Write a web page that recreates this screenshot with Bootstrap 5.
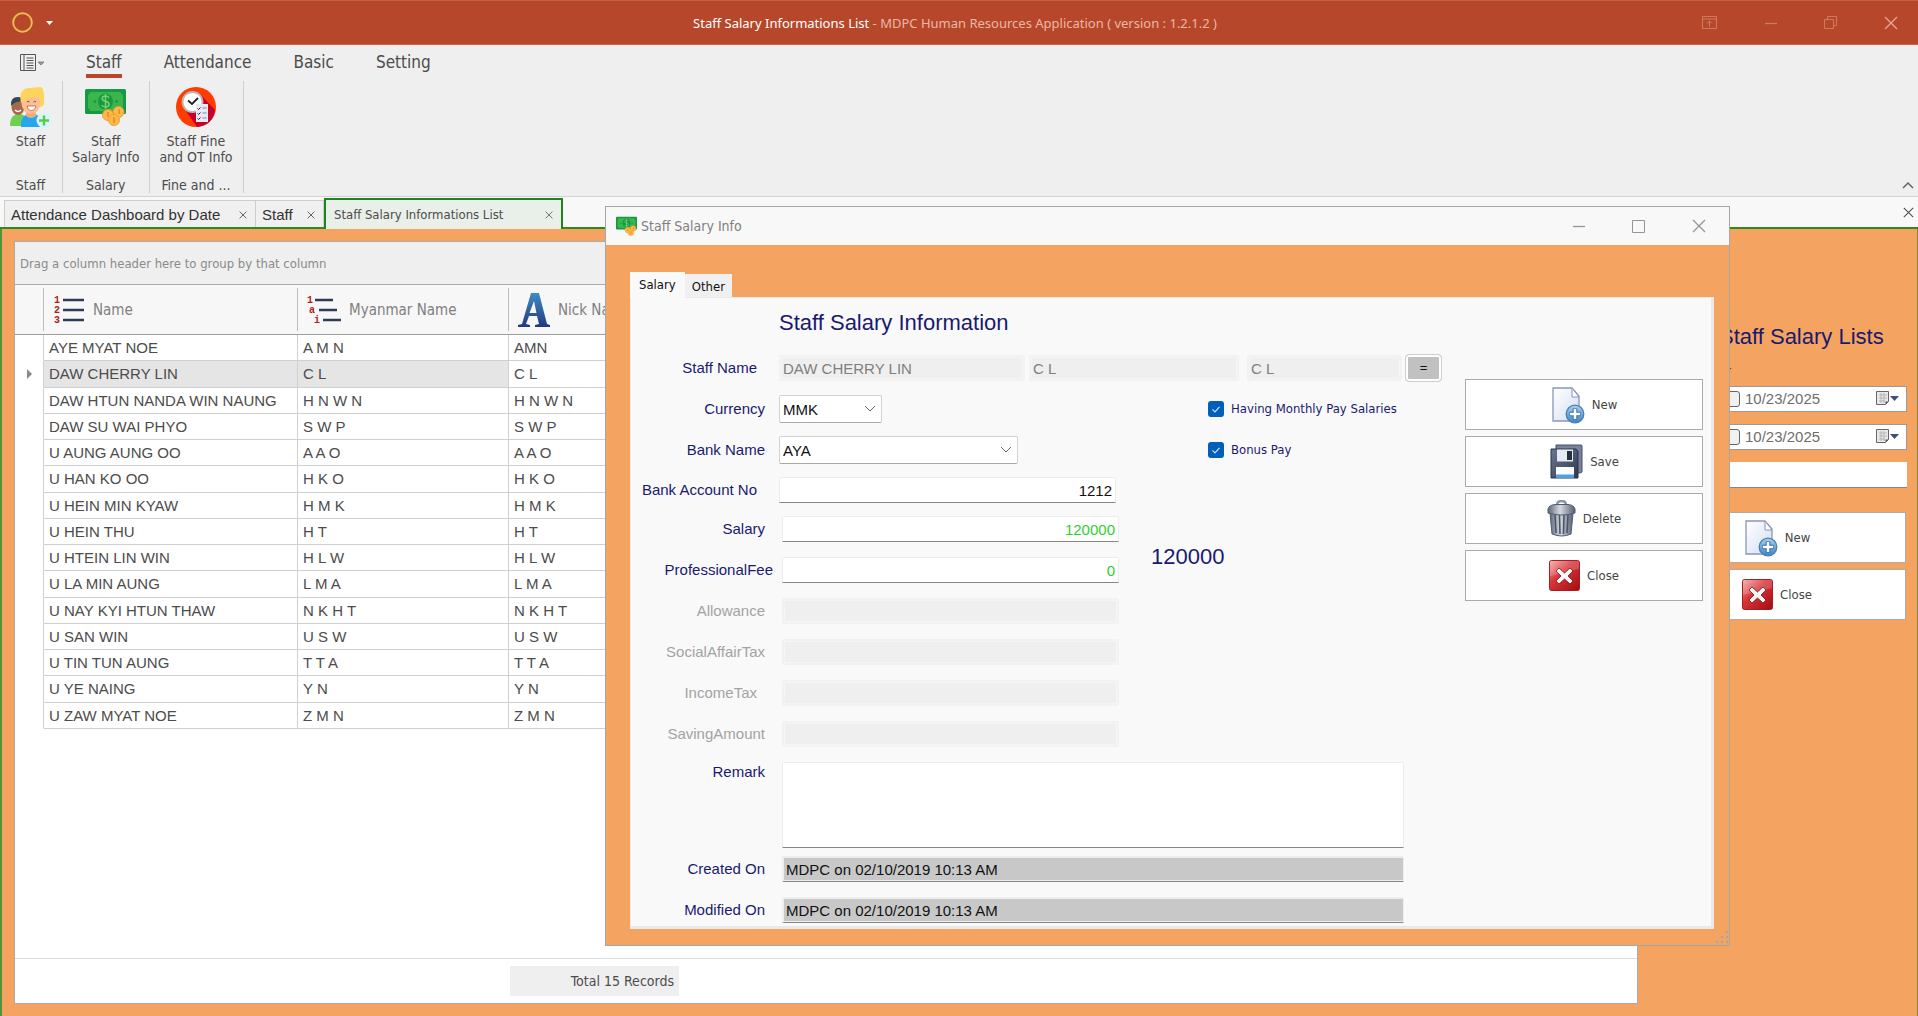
<!DOCTYPE html>
<html lang="en">
<head>
<meta charset="utf-8">
<meta name="viewport" content="width=device-width, initial-scale=1">
<title>MDPC Human Resources Application</title>
<link href="https://cdn.jsdelivr.net/npm/bootstrap@5.3.0/dist/css/bootstrap.min.css" rel="stylesheet">
<style>
:root{--ui:"DejaVu Sans Condensed","Noto Sans",sans-serif;--form:"Liberation Sans",Arial,sans-serif;--brand:#b7472a;--peach:#f4a460;--navy:#191970;--line:#ababab;--ink:#4c4c4c}
body{font-family:var(--ui);font-size:14px;line-height:16px;color:var(--ink);background:#f8f8f8;overflow:hidden}
button{font-family:inherit}
.plain-btn{border:0;background:none;padding:0;color:inherit;line-height:0}

/* title bar */
.app-title{background:var(--brand);height:45px;border-top:1px solid #c2603f;border-bottom:1px solid #c5694f;font:13px/16px "Noto Sans",sans-serif;color:#eab9a6;padding:0 20px 0 12px}
.app-title strong{font-weight:400;color:#fff}
.app-title .side{flex:1 1 0}
.app-title .win-tools{gap:46px;color:#cf7a62}
.app-title .quick{margin-left:13px;color:#fff}
.app-title .shut{color:#e5a797}

/* ribbon */
.ribbon{background:#efefef;border-bottom:1px solid #d2d2d2;height:152px}
.ribbon-tabs{height:36px;padding-left:20px;font-size:17px}
.ribbon-tabs a{color:var(--ink);text-decoration:none;line-height:26px;height:29px;margin-right:42px;border-bottom:4px solid transparent}
.ribbon-tabs a.current{border-color:var(--brand)}
.file-menu{width:66px}
.ribbon-group{border-right:1px solid #cfcfcf;height:112px;padding:5px 10px 0 9px}
.ribbon-group button{color:inherit;line-height:16px}
.ribbon-group svg{display:block;margin:0 auto 5px}
.ribbon-foot{margin-top:auto;padding-top:2px}

/* document tabs */
.doc-tabs{height:32px;padding-left:4px;border-bottom:2px solid #2f8a1d;flex:none}
.doc-tab{height:27px;background:#f0f0f0;border:1px solid #cdcdcd;border-bottom:0;padding:2px 8px 0 6px;font:15px/20px var(--form);color:#333}
.doc-tab.current{height:31px;background:#e9efe9;border:2px solid #1c861c;border-bottom:0;font:13px/20px var(--ui);color:var(--ink);margin-bottom:-2px;padding:0 8px}
.w-dash{width:252px}.w-staff{width:68px}.w-list{width:239px}
.work{background:var(--peach);border-left:2px solid #4f9438;border-right:1px solid #7c8a2a;min-height:0;padding:12px 10px 12px 12px}

/* staff grid */
.sheet{background:#fff;border:1px solid var(--line);min-width:0}
.group-hint{background:#efefef;border-bottom:1px solid var(--line);height:43px;padding:14px 5px;font-size:13px;color:#8a8a8a}
.staff-grid{table-layout:fixed;width:100%;border-collapse:separate;border-spacing:0;font:15px/20px var(--form)}
.staff-grid th{height:50px;background:#f7f7f7;border-bottom:1px solid #9e9e9e;font:15px/20px var(--ui);color:#808080;padding:0 9px;vertical-align:middle;position:relative}
.staff-grid th+th::before{content:"";position:absolute;left:-1px;top:3px;bottom:3px;border-left:1px solid #bdbdbd}
.staff-grid td{height:26px;padding:0 5px;border-right:1px solid #d0d0d0;border-bottom:1px solid #d0d0d0;white-space:nowrap}
.staff-grid tr:nth-child(4n+2) td{height:27px}
.staff-grid tbody td:first-child{border-bottom-color:transparent}
.staff-grid .picked td:nth-child(2),.staff-grid .picked td:nth-child(3){background:#e5e5e5}
.c-mark{width:29px}.c-name{width:254px}.c-mm{width:211px}
.grid-foot{border-top:1px solid #dcdcdc;padding:7px 0 7px 495px}
.grid-foot output{width:169px;height:30px;background:#efefef;line-height:30px;padding-right:5px}

/* right-hand panel */
.filter-pane{width:269px;flex:none;padding:68px 0 0 10px}
.pane-title{font:22px/28px var(--form);color:var(--navy);padding-left:71px;margin:14px 0 9px}
.range-mark{padding-left:79px;height:26px;line-height:16px}
.date-box{height:26px;background:#fff;border:1px solid #9a9a9a;font:15px/24px var(--form);color:#6e6e6e;padding:0 6px 0 75px;margin-bottom:12px}
.date-box input[type=checkbox]{appearance:none;width:16px;height:16px;border:1px solid #666;border-radius:3px;background:#f1f1f1;margin:0 5px 0 0;flex:none}
.date-box input[type=text]{border:0;padding:0;width:90px;color:inherit;background:none}
.search-box{height:26px;border:0;border-bottom:1px solid #868686;background:#fff;width:100%}
.tool-btn{height:51px;background:#fff;border:1px solid #ababab;color:#444;gap:7px;font:13px/16px var(--ui);margin-bottom:6px}
.filter-pane .tool-btn{width:258px}

/* salary window */
.salary-window{position:absolute;left:605px;top:206px;width:1125px;border:1px solid #a6a6a6;background:var(--peach)}
.window-bar{height:38px;background:#f8f8f8;padding:0 23px 0 10px;color:#808080}
.window-bar .win-tools{gap:46px;color:#959595}
.window-body{padding:27px 15px 16px 24px}
.sheet-tab{border:0;background:#f0f0f0;color:#111;font:13px/16px var(--ui);height:23px;padding:2px 7px 0}
.sheet-tab.current{background:#f9f9f9;height:26px;padding:0 9px;margin-bottom:-1px}
.sheet-page{background:#f9f9f9;border:solid #e9e9e9;border-width:1px 3px 3px 1px;padding:11px 8px 3px 0}
.sheet-page h1{font:22px/28px var(--form);color:var(--navy);margin:0 0 17px;padding-left:148px}
.salary-form{width:811px;font:15px/20px var(--form);color:var(--navy)}
.line{margin-bottom:13px}
.deep .line{margin-bottom:15px}
.line>.cap{width:142px;text-align:right;flex:none}
.off>label{color:#a3a3a3}
.near{margin-left:6px}.far{margin-left:9px}
.line input[type=text],.line textarea{height:26px;border:1px solid #ececec;border-bottom:1px solid #868686;padding:0 3px;background:#fff;color:#111;border-radius:2px 2px 0 0}
.line input[type=text]:disabled{border:2px solid #f2f2f2;background:#efefef;box-shadow:inset 0 0 0 1px #f5f5f5;color:#808080;border-radius:2px;padding:0 2px}
.line input[type=text][readonly]{background:#c8c8c8;border-color:#eee #eee #868686;box-shadow:inset 0 -1px #eee;border-width:2px 1px 1px 2px;padding:0 2px}
.line select{height:28px;border:1px solid #d2d2d2;border-bottom-color:#a9a9a9;border-radius:2px;padding:1px 3px 0;color:#111;appearance:none;background:#fff url("data:image/svg+xml,%3Csvg xmlns='http://www.w3.org/2000/svg' width='12' height='8' viewBox='0 0 12 8'%3E%3Cpath d='M1 1l5 5 5-5' fill='none' stroke='%23666'/%3E%3C/svg%3E") no-repeat right 5px center}
.line input.money{color:#32cd32!important}
.line textarea{height:86px;resize:none}
.w-nick{width:155px}.w-mm{width:210px}.w-name{width:246px}.w-cur{width:103px}.w-bank{width:239px}.w-num{width:337px}.w-long{width:622px}
.pick-btn{width:37px;height:28px;border:1px solid #cfcfcf;border-radius:4px;background:#c1c1c1;box-shadow:inset 0 0 0 2px #fff;color:#111;font:13px/20px var(--form);padding:0}
.tick{width:234px;gap:7px;font:13px/16px var(--ui)}
.tick input{appearance:none;flex:none;width:16px;height:16px;border-radius:3px;margin:0;background:#005fb8 url("data:image/svg+xml,%3Csvg xmlns='http://www.w3.org/2000/svg' width='16' height='16' viewBox='0 0 16 16'%3E%3Cpath d='M4.500 8.300l2.500 2.500 4.500-5' fill='none' stroke='%23cfe4f7' stroke-width='1.200'/%3E%3C/svg%3E")}
.net-pay{font:22px/28px var(--form);margin-left:32px;padding-top:0}
.action-col{width:238px;flex:none;padding-top:70px}
.action-col .tool-btn{width:100%}
.grip{position:absolute;right:0;bottom:0}
</style>
</head>
<body class="d-flex flex-column vh-100">

<svg class="position-absolute" width="0" height="0" aria-hidden="true">
  <defs>
    <linearGradient id="gBlue" x1="0" y1="0" x2="0" y2="1"><stop offset="0" stop-color="#a9d0f0"/><stop offset="1" stop-color="#3e86c4"/></linearGradient>
    <linearGradient id="gPaper" x1="0" y1="0" x2="1" y2="1"><stop offset="0" stop-color="#fff"/><stop offset="1" stop-color="#d3def2"/></linearGradient>
    <linearGradient id="gRed" x1="0" y1="0" x2="1" y2="1"><stop offset="0" stop-color="#f3a6a0"/><stop offset=".4" stop-color="#d8353a"/><stop offset="1" stop-color="#a30c10"/></linearGradient>
    <linearGradient id="gCan" x1="0" y1="0" x2="1" y2="0"><stop offset="0" stop-color="#5d6778"/><stop offset=".45" stop-color="#d5dae2"/><stop offset="1" stop-color="#566070"/></linearGradient>
    <linearGradient id="gDisk" x1="0" y1="0" x2="1" y2="1"><stop offset="0" stop-color="#6a7890"/><stop offset="1" stop-color="#2f3a50"/></linearGradient>
    <linearGradient id="gLetter" x1="0" y1="0" x2="0" y2="1"><stop offset="0" stop-color="#3f8cc4"/><stop offset="1" stop-color="#22397c"/></linearGradient>
    <symbol id="iNew" viewBox="0 0 34 38"><path d="M2 2h19l7 8v25H2z" fill="url(#gPaper)" stroke="#8796bd" stroke-width="1.300"/><path d="M21 2v9h7z" fill="#fff" stroke="#8796bd"/><circle cx="24" cy="28" r="8.800" fill="url(#gBlue)" stroke="#4b7fb2" stroke-width="1.300"/><path d="M24 22.500v11M18.500 28h11" stroke="#2f6da8" stroke-width="4.600"/><path d="M24 23v10M19 28h10" stroke="#fff" stroke-width="2.600"/></symbol>
    <symbol id="iSave" viewBox="0 0 34 36"><path d="M7 1h25q1 0 1 1v26l-2 1H7z" fill="#76839b" stroke="#465168"/><path d="M2 5h25l2 2v27H2z" fill="url(#gDisk)" stroke="#2b3448"/><path d="M8 5.500h16v12H8z" fill="#e6ecf5"/><path d="M18 7h5v9h-5z" fill="#27303f"/><path d="M7 23h18v11H7z" fill="#fafcff"/><path d="M7 30.500h18V34H7z" fill="#4fa0df"/></symbol>
    <symbol id="iBin" viewBox="0 0 29 37"><path d="M10 5q0-4 4.500-4T19 5" fill="none" stroke="#8a93a3" stroke-width="2.400"/><path d="M3 13h23l-2 21q-9 4-19 0z" fill="url(#gCan)" stroke="#525c6c"/><path d="M8 15l1 18M12.500 15l.5 19M17 15l-.5 19M21 15l-1 18" stroke="#4b5566" stroke-width="1.600"/><path d="M1 9q1-4 7-4.500h13q6 .5 7 4.500v4q-13 4-27 0z" fill="url(#gCan)" stroke="#525c6c"/></symbol>
    <symbol id="iStop" viewBox="0 0 31 31"><rect x=".5" y=".5" width="30" height="30" rx="2" fill="url(#gRed)" stroke="#a51f20"/><path d="M1 1h29v8L1 16z" fill="#fff" opacity=".18"/><path d="M10 8l5.500 5L21 8l3 3-5 5 5 5-3 3-5.500-5-5.500 5-3-3 5-5-5-5z" fill="#f7f7f7" stroke="#7d1313" stroke-width=".8"/></symbol>
    <symbol id="iMoney" viewBox="0 0 41 38"><rect y="1" width="41" height="25" rx="1.500" fill="#159947"/><path d="M5 4h31a3 3 0 0 0 2 3v13a3 3 0 0 0-2 3H5a3 3 0 0 0-2-3V7a3 3 0 0 0 2-3z" fill="#3cb54a"/><ellipse cx="20.500" cy="13.500" rx="7.500" ry="8" fill="#159947"/><path d="M24 9.800q-1-1.800-3.500-1.800-3.300 0-3.300 2.500 0 2 3.300 2.800 3.600.8 3.600 3 0 2.700-3.600 2.700-2.800 0-3.700-2M20.500 6v15" fill="none" stroke="#7ad06d" stroke-width="1.500"/><circle cx="10" cy="13.500" r="1.400" fill="#159947"/><circle cx="31.500" cy="13.500" r="1.400" fill="#159947"/><g fill="#fdb94a" stroke="#f29a2e" stroke-width=".9"><circle cx="33.500" cy="24" r="5.500"/><circle cx="23" cy="27" r="5.500"/><circle cx="29" cy="32" r="5.500"/></g><path d="M29 29v6M23 24v5M34 21v5" stroke="#f08a1c" stroke-width="1.600"/></symbol>
    <symbol id="iDate" viewBox="0 0 24 18"><path d="M1.500 1.500h12v10l-3 3h-9z" fill="#e8e8e8" stroke="#666"/><path d="M4 5h8M4 8h8M4 11h6M6 3v10M9 3v10" stroke="#b5b5b5"/><path d="M10.500 14.500l3-3h-3z" fill="#555"/><path d="M15 6h9l-4.500 5z" fill="#3a4f7a"/></symbol>
    <symbol id="iX" viewBox="0 0 14 14"><path d="M1 1l12 12M13 1L1 13" stroke="currentColor" stroke-width="1.300"/></symbol>
    <symbol id="iMin" viewBox="0 0 14 14"><path d="M1 7.500h12" stroke="currentColor" stroke-width="1.300"/></symbol>
    <symbol id="iMax" viewBox="0 0 14 14"><path d="M.5 1.500h12v12H.5z" fill="none" stroke="currentColor"/></symbol>
  </defs>
</svg>

<header class="app-title d-flex align-items-center flex-shrink-0">
  <div class="side d-flex align-items-center">
    <svg width="21" height="21" viewBox="0 0 21 21" aria-hidden="true"><circle cx="10.500" cy="10.500" r="9.300" fill="none" stroke="#e0a93c" stroke-width="2"/><circle cx="10.500" cy="10.500" r="9.500" fill="none" stroke="#f6d97c" stroke-width=".6"/></svg>
    <button class="plain-btn quick" aria-label="Quick access"><svg width="7" height="4"><path d="M0 0h7L3.500 4z" fill="currentColor"/></svg></button>
  </div>
  <div><strong>Staff Salary Informations List</strong> - MDPC Human Resources Application ( version : 1.2.1.2 )</div>
  <div class="side win-tools d-flex justify-content-end align-items-center">
    <button class="plain-btn" aria-label="Ribbon display"><svg width="16" height="14" viewBox="0 0 16 14" fill="none" stroke="currentColor"><path d="M.5.500h14v12H.5zM.5 3h14M7.500 11V5M5 7.500L7.500 5 10 7.500"/></svg></button>
    <button class="plain-btn" aria-label="Minimize"><svg width="14" height="14"><use href="#iMin"/></svg></button>
    <button class="plain-btn" aria-label="Restore"><svg width="14" height="14" viewBox="0 0 14 14" fill="none" stroke="currentColor"><path d="M.5 3.500h9v9h-9zM3.500 3V.500h9v9H10"/></svg></button>
    <button class="plain-btn shut" aria-label="Close"><svg width="14" height="14"><use href="#iX"/></svg></button>
  </div>
</header>

<section class="ribbon flex-shrink-0">
  <nav class="ribbon-tabs d-flex align-items-center">
    <button class="plain-btn file-menu text-start" aria-label="File menu"><svg width="26" height="18" viewBox="0 0 26 18" fill="none" stroke="#555"><path d="M.5.500h15v16H.5zM4 .5v16M6.500 4h7M6.500 6.500h7M6.500 9h7M6.500 11.500h7M6.500 14h7"/><path d="M18 8h6l-3 3z" fill="#999" stroke="#888"/></svg></button>
    <a href="#" class="current">Staff</a><a href="#">Attendance</a><a href="#">Basic</a><a href="#">Setting</a>
  </nav>
  <div class="d-flex text-center">
    <div class="ribbon-group d-flex flex-column">
      <button class="plain-btn"><svg width="43" height="42" viewBox="0 0 43 42" aria-hidden="true"><path d="M1 40q0-12 9-12 5 0 7 4v8z" fill="#6fd04f"/><ellipse cx="9" cy="21" rx="6.500" ry="8" fill="#a8694b"/><path d="M2 20q-1-9 7-9 5 0 6 5-8-2-13 4z" fill="#33475a"/><path d="M6 24q3 3 6 0" stroke="#fff" stroke-width="1.500" fill="none"/><path d="M12 41q-1-13 10-13 12 0 12 13z" fill="#25a7f0"/><path d="M17 24h10v6q-5 4-10 0z" fill="#f5a87a"/><ellipse cx="22" cy="17" rx="9.500" ry="11" fill="#ffbe94"/><path d="M12 17Q9 3 20 2l12-1q4 2 3 17-3 5-4 2 1-8-3-9-10 1-16 6z" fill="#ffd35c"/><path d="M18 16q1-1.500 2.500 0M24.500 16q1-1.500 2.500 0" stroke="#7a4a35" fill="none"/><path d="M18 20h9q-1 4.500-4.500 4.500T18 20z" fill="#fff" stroke="#a5553a" stroke-width=".7"/><circle cx="35" cy="34.500" r="7.500" fill="#d8f3fb"/><path d="M35 29.500v10M30 34.500h10" stroke="#5acb46" stroke-width="2.400"/></svg>Staff</button>
      <div class="ribbon-foot">Staff</div>
    </div>
    <div class="ribbon-group d-flex flex-column">
      <button class="plain-btn"><svg width="41" height="42" viewBox="0 -1 41 40" aria-hidden="true"><use href="#iMoney" width="41" height="38"/></svg>Staff<br>Salary Info</button>
      <div class="ribbon-foot">Salary</div>
    </div>
    <div class="ribbon-group d-flex flex-column">
      <button class="plain-btn"><svg width="42" height="42" viewBox="0 0 42 42" aria-hidden="true"><circle cx="21" cy="21" r="20" fill="#ff3d00"/><path d="M26 9l14 15q-2 15-18 17l-11-16z" fill="#c4002b"/><circle cx="17.500" cy="16" r="10" fill="#fff" stroke="#b9b9b9" stroke-width="1.800"/><path d="M13 14.500l4 3.500 6-6" fill="none" stroke="#222" stroke-width="1.800"/><path d="M21 18h12v18H21z" fill="#e9e9f4"/><path d="M22.500 22.500l1 1 2-2M22.500 27.500l1 1 2-2M22.500 32.500l1 1 2-2" stroke="#222" fill="none"/><path d="M27.500 22h4M27.500 27h4M27.500 32h4" stroke="#b5b5cc" stroke-width="2"/></svg>Staff Fine<br>and OT Info</button>
      <div class="ribbon-foot">Fine and ...</div>
    </div>
    <button class="plain-btn ms-auto align-self-end pe-1 pb-1" aria-label="Collapse ribbon"><svg width="12" height="8"><path d="M1 7l5-5 5 5" fill="none" stroke="#666" stroke-width="1.500"/></svg></button>
  </div>
</section>

<nav class="doc-tabs d-flex align-items-end">
  <div class="doc-tab w-dash d-flex justify-content-between align-items-center">Attendance Dashboard by Date<button class="plain-btn" aria-label="Close tab"><svg width="8" height="8"><use href="#iX"/></svg></button></div>
  <div class="doc-tab w-staff d-flex justify-content-between align-items-center border-start-0">Staff<button class="plain-btn" aria-label="Close tab"><svg width="8" height="8"><use href="#iX"/></svg></button></div>
  <div class="doc-tab w-list current d-flex justify-content-between align-items-center">Staff Salary Informations List<button class="plain-btn" aria-label="Close tab"><svg width="8" height="8"><use href="#iX"/></svg></button></div>
  <button class="plain-btn ms-auto me-1 align-self-center" aria-label="Close document"><svg width="11" height="11"><use href="#iX"/></svg></button>
</nav>

<main class="work d-flex flex-fill">
  <section class="sheet d-flex flex-column flex-fill">
    <div class="group-hint">Drag a column header here to group by that column</div>
    <div class="flex-fill overflow-hidden">
      <table class="staff-grid">
        <colgroup><col class="c-mark"><col class="c-name"><col class="c-mm"><col></colgroup>
        <thead><tr>
          <th></th>
          <th><span class="d-flex align-items-center gap-2"><svg width="32" height="32" viewBox="0 0 32 32" aria-hidden="true"><g font-family="Liberation Mono" font-weight="700" font-size="10" fill="#b01c22"><text x="1" y="9">1</text><text x="1" y="19">2</text><text x="1" y="29">3</text></g><path d="M10 6h21M10 16h21M10 26h21" stroke="#2f3b57" stroke-width="2.500"/></svg>Name</span></th>
          <th><span class="d-flex align-items-center gap-2"><svg width="34" height="32" viewBox="0 0 34 32" aria-hidden="true"><g font-family="Liberation Mono" font-weight="700" font-size="10" fill="#b01c22"><text x="0" y="9">1</text><text x="2" y="19">a</text><text x="7" y="29">i</text></g><path d="M8 6h18M12 16h18M16 26h18" stroke="#2f3b57" stroke-width="2.500"/></svg>Myanmar Name</span></th>
          <th><span class="d-flex align-items-center gap-2"><svg width="32" height="36" viewBox="0 0 32 36" aria-hidden="true"><path d="M13 1h8l8 31 3 1v2H17v-2l4-1-2-8h-8l-3 8 4 1v2H0v-2l4-1zM16 9l-4.500 12h7z" fill="url(#gLetter)"/></svg>Nick Name</span></th>
        </tr></thead>
        <tbody id="rows"></tbody>
      </table>
    </div>
    <div class="grid-foot"><output class="d-block text-end">Total 15 Records</output></div>
  </section>

  <aside class="filter-pane">
    <h2 class="pane-title">Staff Salary Lists</h2>
    <div class="range-mark">-</div>
    <div class="date-box d-flex align-items-center"><input type="checkbox" aria-label="Use start date"><input type="text" value="10/23/2025" aria-label="Start date"><button class="plain-btn ms-auto" aria-label="Pick start date"><svg width="26" height="18"><use href="#iDate"/></svg></button></div>
    <div class="date-box d-flex align-items-center"><input type="checkbox" aria-label="Use end date"><input type="text" value="10/23/2025" aria-label="End date"><button class="plain-btn ms-auto" aria-label="Pick end date"><svg width="26" height="18"><use href="#iDate"/></svg></button></div>
    <input type="text" class="search-box mb-4" aria-label="Search staff">
    <button class="tool-btn d-flex justify-content-center align-items-center"><svg width="34" height="38"><use href="#iNew"/></svg>New</button>
    <button class="tool-btn d-flex justify-content-center align-items-center"><svg width="31" height="31"><use href="#iStop"/></svg>Close</button>
  </aside>
</main>

<section class="salary-window" role="dialog" aria-label="Staff Salary Info">
  <div class="window-bar d-flex align-items-center">
    <svg width="21" height="20" class="me-1" aria-hidden="true"><use href="#iMoney"/></svg>Staff Salary Info
    <div class="win-tools d-flex ms-auto">
      <button class="plain-btn" aria-label="Minimize"><svg width="14" height="14"><use href="#iMin"/></svg></button>
      <button class="plain-btn" aria-label="Maximize"><svg width="14" height="14"><use href="#iMax"/></svg></button>
      <button class="plain-btn" aria-label="Close"><svg width="14" height="14"><use href="#iX"/></svg></button>
    </div>
  </div>
  <div class="window-body">
    <div class="d-flex align-items-end"><button class="sheet-tab current">Salary</button><button class="sheet-tab">Other</button></div>
    <div class="sheet-page d-flex justify-content-between align-items-start">
      <form class="salary-form">
        <h1>Staff Salary Information</h1>
        <div class="line d-flex align-items-center"><label for="fName" class="cap pe-3">Staff Name</label><input type="text" id="fName" class="near w-name" value="DAW CHERRY LIN" disabled><input type="text" class="w-mm ms-1" value="C L" aria-label="Myanmar name" disabled><input type="text" class="w-nick ms-2" value="C L" aria-label="Nick name" disabled><button type="button" class="pick-btn ms-auto">=</button></div>
        <div class="line d-flex align-items-center"><label for="fCur" class="cap pe-2">Currency</label><select id="fCur" class="near w-cur"><option>MMK</option></select><label class="tick d-flex align-items-center ms-auto"><input type="checkbox" checked>Having Monthly Pay Salaries</label></div>
        <div class="line d-flex align-items-center"><label for="fBank" class="cap pe-2">Bank Name</label><select id="fBank" class="near w-bank"><option>AYA</option></select><label class="tick d-flex align-items-center ms-auto"><input type="checkbox" checked>Bonus Pay</label></div>
        <div class="line d-flex align-items-center"><label for="fAcc" class="cap pe-3">Bank Account No</label><input type="text" id="fAcc" class="near w-num text-end" value="1212"></div>
        <div class="deep">
          <div class="d-flex align-items-center">
            <div>
              <div class="line d-flex align-items-center"><label for="fSal" class="cap pe-2">Salary</label><input type="text" id="fSal" class="far w-num money text-end" value="120000"></div>
              <div class="line d-flex align-items-center"><label for="fPro" class="cap">ProfessionalFee</label><input type="text" id="fPro" class="far w-num money text-end" value="0"></div>
            </div>
            <output class="net-pay">120000</output>
          </div>
          <div class="line off d-flex align-items-center"><label for="fAll" class="cap pe-2">Allowance</label><input type="text" id="fAll" class="far w-num" disabled></div>
          <div class="line off d-flex align-items-center"><label for="fSoc" class="cap pe-2">SocialAffairTax</label><input type="text" id="fSoc" class="far w-num" disabled></div>
          <div class="line off d-flex align-items-center"><label for="fInc" class="cap pe-3">IncomeTax</label><input type="text" id="fInc" class="far w-num" disabled></div>
          <div class="line off d-flex align-items-center"><label for="fSav" class="cap pe-2">SavingAmount</label><input type="text" id="fSav" class="far w-num" disabled></div>
          <div class="line d-flex mb-2"><label for="fRem" class="cap pe-2">Remark</label><textarea id="fRem" class="far w-long"></textarea></div>
          <div class="line d-flex align-items-center"><label for="fCre" class="cap pe-2">Created On</label><input type="text" id="fCre" class="far w-long" value="MDPC on 02/10/2019 10:13 AM" readonly></div>
          <div class="line d-flex align-items-center mb-0"><label for="fMod" class="cap pe-2">Modified On</label><input type="text" id="fMod" class="far w-long" value="MDPC on 02/10/2019 10:13 AM" readonly></div>
        </div>
      </form>
      <div class="action-col">
        <button class="tool-btn d-flex justify-content-center align-items-center"><svg width="34" height="38"><use href="#iNew"/></svg>New</button>
        <button class="tool-btn d-flex justify-content-center align-items-center"><svg width="34" height="36"><use href="#iSave"/></svg>Save</button>
        <button class="tool-btn d-flex justify-content-center align-items-center"><svg width="29" height="37"><use href="#iBin"/></svg>Delete</button>
        <button class="tool-btn d-flex justify-content-center align-items-center"><svg width="31" height="31"><use href="#iStop"/></svg>Close</button>
      </div>
    </div>
  </div>
  <svg class="grip" width="14" height="14" fill="#a6a6a6" aria-hidden="true"><path d="M11 0h2v2h-2zM6 5h2v2H6zM11 5h2v2h-2zM1 10h2v2H1zM6 10h2v2H6zM11 10h2v2h-2z"/></svg>
</section>

<script src="https://cdn.jsdelivr.net/npm/bootstrap@5.3.0/dist/js/bootstrap.bundle.min.js"></script>
<script>
const staff=[["AYE MYAT NOE","A M N","AMN"],["DAW CHERRY LIN","C L"],["DAW HTUN NANDA WIN NAUNG","H N W N"],["DAW SU WAI PHYO","S W P"],["U AUNG AUNG OO","A A O"],["U HAN KO OO","H K O"],["U HEIN MIN KYAW","H M K"],["U HEIN THU","H T"],["U HTEIN LIN WIN","H L W"],["U LA MIN AUNG","L M A"],["U NAY KYI HTUN THAW","N K H T"],["U SAN WIN","U S W"],["U TIN TUN AUNG","T T A"],["U YE NAING","Y N"],["U ZAW MYAT NOE","Z M N"]];
const arrow='<svg class="d-block mx-auto" width="5" height="10"><path d="M0 0l5 5-5 5z" fill="#8a8a8a"/></svg>';
document.getElementById("rows").innerHTML=staff.map((s,i)=>`<tr${i===1?' class="picked"':''}><td>${i===1?arrow:''}</td><td>${s[0]}</td><td>${s[1]}</td><td>${s[2]||s[1]}</td></tr>`).join("");
</script>
</body>
</html>
